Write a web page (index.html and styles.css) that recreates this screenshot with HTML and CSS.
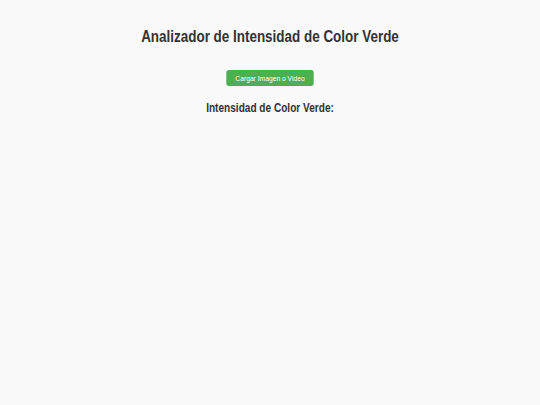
FILE: index.html
```html
<!DOCTYPE html>
<html lang="es">
<head>
  <meta charset="UTF-8" />
  <meta name="viewport" content="width=device-width, initial-scale=1.0"/>
  <title>Analizador de Intensidad de Color Verde</title>
  <link rel="stylesheet" href="styles.css">
</head>
<body>

  <div class="container">
    <h1>Analizador de Intensidad de Color Verde</h1>
    <input type="file" id="fileInput" accept="image/*,video/*" hidden>
    <button class="upload" onclick="document.getElementById('fileInput').click()">Cargar Imagen o Video</button>
    <div class="output" id="output"></div>
    <h2>Intensidad de Color Verde:</h2>
    <div class="result" id="result"></div>
  </div>

</body>
</html>
```

FILE: styles.css
```css
* {
  box-sizing: border-box;
}

body {
  background-color: #f9f9f9;
  color: #333;
  font-family: 'Liberation Sans', Arial, sans-serif;
  margin: 0;
  padding: 10px;
}

.container {
  display: flex;
  flex-direction: column;
  align-items: center;
  text-align: center;
  transform: scaleX(0.84);
}

h1 {
  font-size: 16px;
  line-height: 18px;
  margin: 18px 0 24px;
}

.upload {
  background-color: #4caf50;
  color: #fff;
  font-family: inherit;
  font-size: 8px;
  line-height: 9px;
  border: none;
  border-radius: 3px;
  padding: 3.5px 10.5px;
  cursor: pointer;
}

.upload:hover {
  background-color: #45a049;
}

h2 {
  font-size: 12px;
  line-height: 14px;
  margin: 15px 0 0;
}
```
